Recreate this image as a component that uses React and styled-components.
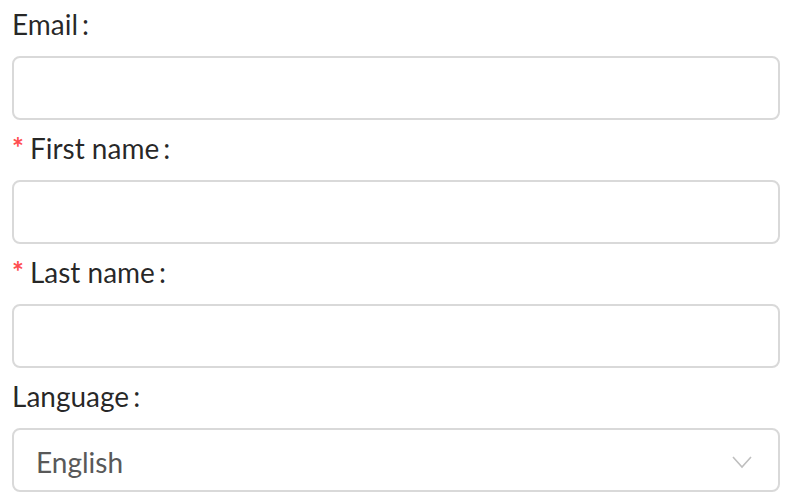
import React from "react";
import styled, { createGlobalStyle } from "styled-components";

const GlobalStyle = createGlobalStyle`
  body {
    margin: 0;
    background: #fff;
    font-family: Lato, "Noto Sans", sans-serif;
  }
`;

export default function App() {
  return (
    <>
      <GlobalStyle />
      <Form>
        <Field>
          <Label>Email</Label>
          <Input type="text" />
        </Field>
        <Field>
          <Label required>First name</Label>
          <Input type="text" />
        </Field>
        <Field>
          <Label required>Last name</Label>
          <Input type="text" />
        </Field>
        <Field>
          <Label>Language</Label>
          <Select>
            <span>English</span>
            <svg width="20" height="14" viewBox="0 0 20 14">
              <path d="M1 2 L10 12 L19 2" fill="none" stroke="#bfbfbf" strokeWidth="1.6" />
            </svg>
          </Select>
        </Field>
      </Form>
    </>
  );
}

function Label({ required, children }) {
  return (
    <LabelRow>
      {required && <Star>*</Star>}
      {children}
      <Colon>:</Colon>
    </LabelRow>
  );
}

const Form = styled.div`
  display: flex;
  flex-direction: column;
  padding: 0 12px;
  gap: 4px;
`;

const Field = styled.div`
  display: flex;
  flex-direction: column;
  gap: 12px;
`;

const LabelRow = styled.label`
  box-sizing: border-box;
  display: flex;
  align-items: center;
  height: 44px;
  padding-top: 4px;
  font-size: 28px;
  line-height: 40px;
  color: rgba(0, 0, 0, 0.85);
`;

const Star = styled.span`
  color: #ff4d4f;
  font-size: 28px;
  font-weight: 700;
  line-height: 28px;
  margin-right: 6px;
  margin-top: -2px;
`;

const Colon = styled.span`
  margin-left: 4px;
`;

const Input = styled.input`
  box-sizing: border-box;
  width: 100%;
  height: 64px;
  border: 2px solid #d9d9d9;
  border-radius: 8px;
  padding: 0 22px;
  font-family: inherit;
  font-size: 28px;
  outline: none;
`;

const Select = styled.div`
  box-sizing: border-box;
  display: flex;
  align-items: center;
  justify-content: space-between;
  height: 64px;
  border: 2px solid #d9d9d9;
  border-radius: 8px;
  padding: 4px 26px 0 22px;
  font-size: 28px;
  color: #595959;
`;
